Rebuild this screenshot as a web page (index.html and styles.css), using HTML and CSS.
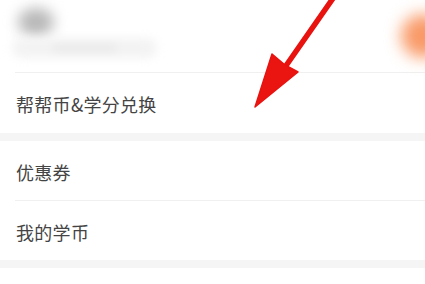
FILE: index.html
```html
<!DOCTYPE html>
<html lang="zh-CN">
<head>
<meta charset="utf-8">
<link rel="stylesheet" href="styles.css">
</head>
<body>
<div class="page">
  <div class="header">
    <div class="profile">
      <div class="avatar-blur"></div>
      <div class="line-blur"><div class="line-core"></div></div>
    </div>
    <div class="badge-blur"></div>
  </div>
  <div class="divider"></div>
  <div class="row row-first">帮帮币&amp;学分兑换</div>
  <div class="band"></div>
  <div class="row">优惠券</div>
  <div class="divider"></div>
  <div class="row">我的学币</div>
  <div class="band"></div>
  <div class="row row-next"><div class="next-blur"></div></div>

  <svg class="arrow" width="425" height="284" viewBox="0 0 425 284">
    <line x1="336" y1="-6" x2="283" y2="70" stroke="#e8120f" stroke-width="5.5" stroke-linecap="round"/>
    <polygon points="255,107 272,54 285,65 298,72" fill="#ea1410" stroke="#e8120f" stroke-width="1.5" stroke-linejoin="round"/>
  </svg>
</div>
</body>
</html>
```

FILE: styles.css
```css
html, body {
  margin: 0;
  padding: 0;
  background: #ffffff;
}
.page {
  position: relative;
  width: 425px;
  height: 284px;
  overflow: hidden;
  font-family: "Noto Sans CJK SC", "Noto Sans", sans-serif;
  background: #ffffff;
}
.header {
  height: 72px;
  display: flex;
  justify-content: space-between;
  align-items: flex-start;
}
.profile {
  padding: 8px 0 0 18px;
  display: flex;
  flex-direction: column;
  gap: 2px;
}
.avatar-blur {
  width: 36px;
  height: 28px;
  border-radius: 50%;
  background: #b8b8b8;
  filter: blur(7px);
}
.line-blur {
  margin-left: -6px;
  width: 145px;
  height: 20px;
  border-radius: 10px;
  background: #f3f3f3;
  filter: blur(5px);
  display: flex;
  justify-content: center;
  align-items: center;
}
.line-core {
  width: 65px;
  height: 8px;
  background: #e9e9e9;
  border-radius: 4px;
}
.badge-blur {
  margin-top: 14px;
  margin-right: -20px;
  width: 44px;
  height: 44px;
  border-radius: 50%;
  background: #f99a68;
  filter: blur(8px);
}
.divider {
  height: 1px;
  margin-left: 15px;
  background: #f0f0f0;
}
.row {
  height: 59px;
  display: flex;
  align-items: center;
  padding: 2px 0 0 16px;
  box-sizing: border-box;
  font-size: 18px;
  letter-spacing: 0.3px;
  color: #444444;
}
.row-first {
  height: 60px;
}
.band {
  height: 8px;
  background: #f5f5f5;
}
.row-next {
  align-items: flex-end;
}
.next-blur {
  width: 40px;
  height: 6px;
  background: #ececec;
  filter: blur(2px);
  margin-bottom: -4px;
}
.arrow {
  position: absolute;
  left: 0;
  top: 0;
}
```
